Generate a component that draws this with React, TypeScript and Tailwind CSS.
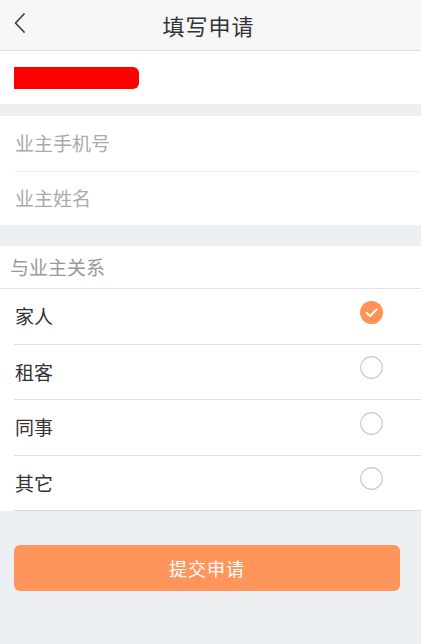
import React, { useState } from 'react';

const relations = ['家人', '租客', '同事', '其它'];

const CheckCircle: React.FC<{ checked: boolean }> = ({ checked }) =>
  checked ? (
    <svg width="23" height="23" viewBox="0 0 23 23">
      <circle cx="11.5" cy="11.5" r="11.5" fill="#ff9357" />
      <path d="M6.5 11.8 L10 15 L16.5 8.5" fill="none" stroke="#fff" strokeWidth="2" strokeLinecap="round" strokeLinejoin="round" />
    </svg>
  ) : (
    <svg width="23" height="23" viewBox="0 0 23 23">
      <circle cx="11.5" cy="11.5" r="10.8" fill="#fff" stroke="#c9c9c9" strokeWidth="1.2" />
    </svg>
  );

const App: React.FC = () => {
  const [selected, setSelected] = useState(0);

  return (
    <div className="min-h-[644px] bg-[#ecf0f3] font-['Noto_Sans_CJK_SC','Noto_Sans',sans-serif]">
      <div className="relative flex h-[51px] items-center justify-center border-b border-[#dcdcdc] bg-[#f6f7f9]">
        <svg className="absolute left-[13px] top-[12px]" width="14" height="22" viewBox="0 0 14 22">
          <path d="M11 2 L2.5 11 L11 20" fill="none" stroke="#444" strokeWidth="1.8" strokeLinecap="round" strokeLinejoin="round" />
        </svg>
        <h1 className="-ml-[4px] text-[22px] leading-none text-[#333] tracking-[1px]">填写申请</h1>
      </div>

      <div className="flex h-[53px] items-center bg-white pl-[14px]">
        <div className="h-[22px] w-[125px] rounded-r-[6px] bg-[#ff0000]" />
      </div>

      <div className="mt-[12px] bg-white">
        <div className="flex h-[55px] items-center pl-[15px] text-[19px] text-[#aaa]">业主手机号</div>
        <div className="ml-[14px] border-t border-[#eeeeee]" />
        <div className="flex h-[53px] items-center pl-[15px] text-[19px] text-[#aaa]">业主姓名</div>
      </div>

      <div className="mt-[21px] bg-white">
        <div className="flex h-[43px] items-center border-b border-[#e2e2e2] pl-[10px] text-[19px] text-[#999]">与业主关系</div>
        {relations.map((r, i) => (
          <React.Fragment key={r}>
            {i > 0 && <div className="ml-[14px] border-t border-[#dedede]" />}
            <button
              onClick={() => setSelected(i)}
              className="flex h-[54.5px] w-full items-center justify-between pl-[15px] pr-[38px]"
            >
              <span className="text-[19px] text-[#333]">{r}</span>
              <span className="-mt-[8px] flex">
                <CheckCircle checked={selected === i} />
              </span>
            </button>
          </React.Fragment>
        ))}
        <div className="ml-[14px] border-t border-[#d8d8d8]" />
      </div>

      <div className="pl-[14px] pr-[21px] pt-[34px]">
        <button className="flex h-[46px] w-full items-center justify-center rounded-[6px] bg-[#ff955a] text-[18px] text-white tracking-[1px]">
          提交申请
        </button>
      </div>
    </div>
  );
};

export default App;
